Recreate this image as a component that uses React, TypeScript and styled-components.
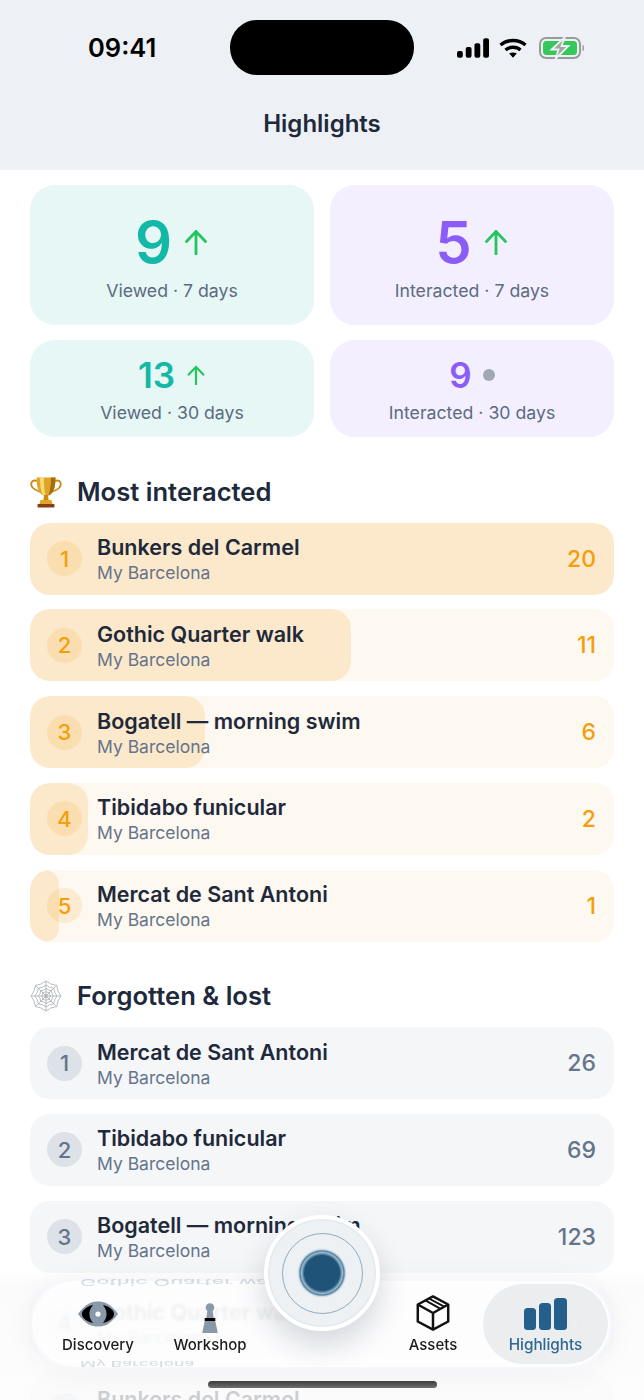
import React from 'react'
import styled, { createGlobalStyle } from 'styled-components'

const GlobalStyle = createGlobalStyle`
  html, body {
    margin: 0;
    padding: 0;
    background: #ffffff;
  }

  * {
    box-sizing: border-box;
  }
`

const Screen = styled.div`
  position: relative;
  width: 644px;
  height: 1400px;
  overflow: hidden;
  background: #ffffff;
  font-family: Inter, 'Liberation Sans', sans-serif;
  color: #1e293b;
`

const Header = styled.header`
  display: flex;
  flex-direction: column;
  height: 170px;
  background: #edf0f4;
`

const StatusBar = styled.div`
  display: grid;
  grid-template-columns: 230px 184px 1fr;
  height: 55px;
  margin-top: 20px;
  align-items: center;
`

const Clock = styled.span`
  padding-left: 88px;
  padding-bottom: 1px;
  font-size: 25.5px;
  font-weight: 600;
  color: #000000;
`

const Island = styled.div`
  height: 55px;
  border-radius: 27px;
  background: #000000;
`

const StatusIcons = styled.div`
  display: flex;
  align-items: center;
  gap: 10px;
  padding-left: 43px;
`

const BatterySlot = styled.div`
  display: flex;
  margin-left: 2px;
`

const Title = styled.h1`
  margin: 34px 0 0;
  text-align: center;
  font-size: 24px;
  line-height: 30px;
  font-weight: 600;
  color: #1e293b;
`

const Content = styled.main`
  display: flex;
  flex-direction: column;
  padding: 15px 30px 0;
`

const StatGrid = styled.div`
  display: grid;
  grid-template-columns: 1fr 1fr;
  grid-template-rows: 139.5px 97px;
  column-gap: 16px;
  row-gap: 15.5px;
`

const StatCard = styled.div<{ $tone: 'teal' | 'purple' }>`
  display: flex;
  flex-direction: column;
  align-items: center;
  justify-content: center;
  border-radius: 25px;
  background: ${p => (p.$tone === 'teal' ? '#e6f7f5' : '#f3effe')};
  color: ${p => (p.$tone === 'teal' ? '#14b8a6' : '#8b5cf6')};
`

const StatValue = styled.div<{ $big?: boolean }>`
  display: flex;
  align-items: center;
  gap: 11px;
  padding-top: ${p => (p.$big ? 3 : 2)}px;
  font-size: ${p => (p.$big ? 58 : 35)}px;
  line-height: ${p => (p.$big ? 66 : 40)}px;
  font-weight: 600;
`

const StatLabel = styled.div<{ $big?: boolean }>`
  margin-top: ${p => (p.$big ? 4 : 6)}px;
  font-size: 17.7px;
  line-height: 24px;
  color: #5b6b80;
`

const Dot = styled.span`
  width: 12px;
  height: 12px;
  border-radius: 50%;
  background: #a0a8b8;
`

const SectionHead = styled.div`
  display: flex;
  align-items: center;
  gap: 15px;
  height: 36px;
  margin-top: 36.5px;
  margin-bottom: 13px;
`

const SectionTitle = styled.h2`
  margin: 0;
  font-size: 25.6px;
  line-height: 36px;
  font-weight: 600;
  color: #1e293b;
`

const RowList = styled.div`
  display: flex;
  flex-direction: column;
  gap: 14.75px;
`

const Row = styled.div<{ $tone: 'amber' | 'slate' }>`
  position: relative;
  flex: none;
  display: flex;
  align-items: center;
  height: 72px;
  padding: 0 18px 0 17px;
  border-radius: 20px;
  overflow: hidden;
  background: ${p => (p.$tone === 'amber' ? '#fdf8f0' : '#f5f6f8')};
  color: ${p => (p.$tone === 'amber' ? '#f59e0b' : '#64748b')};
`

const RowFill = styled.div`
  position: absolute;
  left: 0;
  top: 0;
  bottom: 0;
  border-radius: 20px;
  background: #fce9cb;
`

const Rank = styled.div<{ $tone: 'amber' | 'slate' }>`
  position: relative;
  flex: none;
  display: flex;
  align-items: center;
  justify-content: center;
  width: 35px;
  height: 35px;
  border-radius: 50%;
  font-size: 22px;
  font-weight: 500;
  background: ${p => (p.$tone === 'amber' ? 'rgba(245, 158, 11, 0.14)' : '#dde1e8')};
`

const RowText = styled.div`
  position: relative;
  flex: 1;
  min-width: 0;
  padding: 2px 0 0 15px;
`

const RowTitle = styled.div`
  font-size: 21.5px;
  line-height: 26px;
  font-weight: 600;
  color: #1e293b;
  white-space: nowrap;
`

const RowSub = styled.div`
  padding-top: 1px;
  font-size: 17.5px;
  line-height: 24px;
  color: #64748b;
`

const RowCount = styled.div`
  position: relative;
  font-size: 23px;
  font-weight: 500;
`

const BottomFade = styled.div`
  position: absolute;
  left: 0;
  right: 0;
  bottom: 0;
  height: 132px;
  background: linear-gradient(
    to bottom,
    rgba(255, 255, 255, 0) 0,
    rgba(250, 250, 251, 0.8) 18px,
    rgba(252, 252, 252, 0.78) 100%
  );
`

const TabBar = styled.nav`
  position: absolute;
  left: 30px;
  top: 1279px;
  display: flex;
  align-items: stretch;
  width: 582px;
  height: 90px;
  padding: 5px 4px 5px 12px;
  border-radius: 45px;
  overflow: hidden;
  background: rgba(255, 255, 255, 0.66);
  backdrop-filter: blur(1.4px);
  box-shadow: inset 0 0 0 2px rgba(243, 246, 252, 0.85), 0 2px 30px rgba(30, 41, 59, 0.05);
`

const Mirror = styled.div<{ $bottom?: boolean }>`
  position: absolute;
  left: 50px;
  ${p => (p.$bottom ? 'bottom: 1px;' : 'top: -1px;')}
  font-size: ${p => (p.$bottom ? 17.5 : 21.7)}px;
  line-height: 9px;
  font-weight: 500;
  color: rgba(100, 116, 139, 0.24);
  transform: scaleY(-0.42);
  filter: blur(0.4px);
  white-space: nowrap;
`

const Tab = styled.div<{ $width: number; $active?: boolean }>`
  position: relative;
  flex: none;
  display: flex;
  flex-direction: column;
  align-items: center;
  justify-content: flex-end;
  width: ${p => p.$width}px;
  padding-bottom: 9px;
  border-radius: 40px;
  background: ${p => (p.$active ? 'rgba(232, 234, 235, 0.86)' : 'transparent')};
`

const TabIcon = styled.div<{ $lift?: number }>`
  display: flex;
  align-items: flex-end;
  justify-content: center;
  height: 46px;
  margin-bottom: 2px;
  padding-bottom: ${p => p.$lift ?? 0}px;
`

const TabLabel = styled.span<{ $active?: boolean }>`
  font-size: ${p => (p.$active ? 15.3 : 15)}px;
  line-height: 20px;
  font-weight: 500;
  color: ${p => (p.$active ? '#2f6794' : '#1c1c1e')};
`

const TabGap = styled.div`
  flex: 1;
`

const Capture = styled.div`
  position: absolute;
  left: 264px;
  top: 1215px;
  display: flex;
  align-items: center;
  justify-content: center;
  width: 116px;
  height: 116px;
  border-radius: 50%;
  background: #eef1f4;
  border: 4px solid #ffffff;
  box-shadow: inset 0 0 0 1.5px #e2eaed, 0 14px 30px rgba(30, 41, 59, 0.18);
`

const CaptureRing = styled.div`
  display: flex;
  align-items: center;
  justify-content: center;
  width: 81px;
  height: 81px;
  border-radius: 50%;
  border: 1.5px solid #8fabc0;
`

const CaptureCore = styled.div`
  width: 50px;
  height: 50px;
  border-radius: 50%;
  background: radial-gradient(
    circle closest-side,
    #1f5478 0,
    #1f5478 70%,
    #5c89a8 76%,
    #9dbacd 82%,
    #4f7f9f 88%,
    rgba(143, 176, 200, 0.35) 94%,
    rgba(143, 176, 200, 0) 100%
  );
`

const HomeIndicator = styled.div`
  position: absolute;
  left: 208px;
  top: 1381px;
  width: 229px;
  height: 7px;
  border-radius: 4px;
  background: linear-gradient(to bottom, #3c3c3c, #707070);
`

const Arrow: React.FC<{ size: number }> = ({ size }) => (
  <svg width={size} height={size} viewBox="0 0 26 26" fill="none" stroke="#22c55e" strokeWidth="2.8">
    <path d="M13 25V2.5M3.5 12.5L13 2.5l9.5 10" strokeLinecap="round" strokeLinejoin="round" />
  </svg>
)

const SignalIcon = () => (
  <svg width="32" height="20" viewBox="0 0 33 20" fill="#000000">
    <rect x="0" y="13" width="6" height="7" rx="2" />
    <rect x="9" y="9" width="6" height="11" rx="2" />
    <rect x="18" y="5" width="6" height="15" rx="2" />
    <rect x="27" y="0" width="6" height="20" rx="2" />
  </svg>
)

const WifiIcon = () => (
  <svg width="28" height="20" viewBox="0 0 28 20" fill="none" stroke="#000000" strokeWidth="3.4">
    <path d="M1.5 7C8.5 1 19.5 1 26.5 7" />
    <path d="M6.5 12c4.2-3.6 10.800-3.600 15 0" />
    <path d="M14 19.800l-3.800-4.200c2.200-1.600 5.400-1.600 7.600 0z" fill="#000000" stroke="none" />
  </svg>
)

const BatteryIcon = () => (
  <svg width="47" height="22" viewBox="0 0 47 22" fill="none">
    <rect x="1" y="1" width="40" height="20" rx="6" stroke="#9a9a9a" strokeWidth="2" />
    <rect x="4" y="4" width="34" height="14" rx="3.5" fill="#34c759" />
    <path d="M43.5 7.500c2 .5 2 6.500 0 7z" fill="#9a9a9a" />
    <path d="M26 0L12.500 12.500h7L16.500 22 29.500 9h-7z" fill="#a2a7a2" stroke="#edf0f4" strokeWidth="1.8" />
  </svg>
)

const TrophyIcon = () => (
  <svg width="32" height="32" viewBox="0 0 32 32" fill="none">
    <path d="M7 5C1.500 3 0 8 2.500 11.500 4.500 14 8 15 10.500 16" stroke="#c98a12" strokeWidth="1.8" />
    <path d="M25 5C30.500 3 32 8 29.500 11.500 27.500 14 24 15 21.500 16" stroke="#c98a12" strokeWidth="1.8" />
    <path d="M6.500 1.500h19c0 9-1.500 15.500-7 18h-5c-5.500-2.500-7-9-7-18z" fill="#e0a526" />
    <path d="M10 1.500h4c-.5 6 .5 12 1.500 18h-2.500C10.500 15 10 8 10 1.500z" fill="#f7d978" />
    <path d="M21 1.500h4.500c0 9-1.500 15.500-7 18 1.500-4 2.500-11 2.500-18z" fill="#a66c0e" />
    <path d="M14 19h4l.5 5h-5z" fill="#c98a12" />
    <path d="M10.500 24h11l1 4h-13z" fill="#e0a526" />
    <rect x="7.500" y="28" width="17" height="3.500" rx="0.8" fill="#8a3d12" />
  </svg>
)

// web rings sag in towards the centre between the spokes
const webRing = (r: number) => {
  const point = (a: number, d: number) => `${(16 + Math.cos(a) * d).toFixed(2)} ${(16 + Math.sin(a) * d).toFixed(2)}`
  let d = `M${point(0, r)}`
  for (let i = 1; i <= 8; i++) {
    const a = (i * Math.PI) / 4
    d += `Q${point(a - Math.PI / 8, r * 0.8)} ${point(a, r)}`
  }
  return d + 'Z'
}

const WebIcon = () => (
  <svg width="32" height="32" viewBox="0 0 32 32" fill="none" stroke="#a9adb2" strokeWidth="0.8">
    {[15, 11, 7.5, 4.5, 2].map(r => (
      <path key={r} d={webRing(r)} />
    ))}
    <path d="M16 1V31M1 16H31M5.400 5.400L26.600 26.600M26.600 5.400L5.400 26.600" />
  </svg>
)

const EyeIcon = () => (
  <svg width="42" height="26" viewBox="0 0 42 26">
    <path d="M1 13C9 2 15 .5 21 .5S33 2 41 13c-8 11-14 12.500-20 12.500S9 24 1 13z" fill="#8a99a9" />
    <path d="M16 4C8 6 5 10 5 13s3 7 11 9c-3-4-3.500-6.500-3.500-9s.5-5 3.500-9z" fill="#000000" />
    <path d="M26 4c8 2 11 6 11 9s-3 7-11 9c3-4 3.500-6.500 3.500-9s-.5-5-3.500-9z" fill="#000000" />
    <circle cx="21" cy="13" r="2.600" fill="#ffffff" />
  </svg>
)

const PawnIcon = () => (
  <svg width="16" height="30" viewBox="0 0 16 30">
    <circle cx="8" cy="4.500" r="4.300" fill="#8a99a9" />
    <path d="M5.500 7h5l1.200 8H4.300z" fill="#8a99a9" />
    <rect x="2.700" y="15" width="10.600" height="3" fill="#000000" />
    <path d="M2.700 18h10.600l2.500 12H.2z" fill="#8a99a9" />
  </svg>
)

const BoxIcon = () => (
  <svg width="34" height="36" viewBox="0 0 38 40" fill="none" stroke="#111111" strokeWidth="2.8" strokeLinejoin="round">
    <path d="M19 1.500L36 10.500V29.500L19 38.500 2 29.500V10.500Z" />
    <path d="M2 10.500L19 20 36 10.500M19 20V38.500" />
    <path d="M10.500 6L27.500 15.300M14.500 3.800L31.500 13" strokeWidth="2.2" />
  </svg>
)

const BarsIcon = () => (
  <svg width="43" height="32" viewBox="0 0 43 32" fill="#255f8c">
    <rect x="0" y="10" width="12" height="22" rx="3.5" />
    <rect x="15" y="5" width="12" height="27" rx="3.5" />
    <rect x="30" y="0" width="13" height="32" rx="3.5" />
  </svg>
)

type Place = { title: string; count: number }

const top: Place[] = [
  { title: 'Bunkers del Carmel', count: 20 },
  { title: 'Gothic Quarter walk', count: 11 },
  { title: 'Bogatell — morning swim', count: 6 },
  { title: 'Tibidabo funicular', count: 2 },
  { title: 'Mercat de Sant Antoni', count: 1 },
]

const forgotten: Place[] = [
  { title: 'Mercat de Sant Antoni', count: 26 },
  { title: 'Tibidabo funicular', count: 69 },
  { title: 'Bogatell — morning swim', count: 123 },
  { title: 'Gothic Quarter walk', count: 203 },
  { title: 'Bunkers del Carmel', count: 240 },
]

const PlaceRow: React.FC<{ place: Place; rank: number; tone: 'amber' | 'slate'; max?: number }> = ({
  place,
  rank,
  tone,
  max,
}) => (
  <Row $tone={tone}>
    {max ? <RowFill style={{ width: `${(place.count / max) * 100}%` }} /> : null}
    <Rank $tone={tone}>{rank}</Rank>
    <RowText>
      <RowTitle>{place.title}</RowTitle>
      <RowSub>My Barcelona</RowSub>
    </RowText>
    <RowCount>{place.count}</RowCount>
  </Row>
)

const App: React.FC = () => (
  <Screen>
    <GlobalStyle />
    <Header>
      <StatusBar>
        <Clock>09:41</Clock>
        <Island />
        <StatusIcons>
          <SignalIcon />
          <WifiIcon />
          <BatterySlot>
            <BatteryIcon />
          </BatterySlot>
        </StatusIcons>
      </StatusBar>
      <Title>Highlights</Title>
    </Header>

    <Content>
      <StatGrid>
        <StatCard $tone="teal">
          <StatValue $big>
            9 <Arrow size={26} />
          </StatValue>
          <StatLabel $big>Viewed · 7 days</StatLabel>
        </StatCard>
        <StatCard $tone="purple">
          <StatValue $big>
            5 <Arrow size={26} />
          </StatValue>
          <StatLabel $big>Interacted · 7 days</StatLabel>
        </StatCard>
        <StatCard $tone="teal">
          <StatValue>
            13 <Arrow size={20} />
          </StatValue>
          <StatLabel>Viewed · 30 days</StatLabel>
        </StatCard>
        <StatCard $tone="purple">
          <StatValue>
            9 <Dot />
          </StatValue>
          <StatLabel>Interacted · 30 days</StatLabel>
        </StatCard>
      </StatGrid>

      <SectionHead>
        <TrophyIcon />
        <SectionTitle>Most interacted</SectionTitle>
      </SectionHead>
      <RowList>
        {top.map((place, i) => (
          <PlaceRow key={place.title} place={place} rank={i + 1} tone="amber" max={20} />
        ))}
      </RowList>

      <SectionHead>
        <WebIcon />
        <SectionTitle>Forgotten &amp; lost</SectionTitle>
      </SectionHead>
      <RowList>
        {forgotten.map((place, i) => (
          <PlaceRow key={place.title} place={place} rank={i + 1} tone="slate" />
        ))}
      </RowList>
    </Content>

    <BottomFade />

    <TabBar>
      <Mirror>Gothic Quarter walk</Mirror>
      <Mirror $bottom>My Barcelona</Mirror>
      <Tab $width={112}>
        <TabIcon $lift={6}>
          <EyeIcon />
        </TabIcon>
        <TabLabel>Discovery</TabLabel>
      </Tab>
      <Tab $width={112}>
        <TabIcon>
          <PawnIcon />
        </TabIcon>
        <TabLabel>Workshop</TabLabel>
      </Tab>
      <TabGap />
      <Tab $width={100}>
        <TabIcon $lift={2}>
          <BoxIcon />
        </TabIcon>
        <TabLabel>Assets</TabLabel>
      </Tab>
      <Tab $width={125} $active>
        <TabIcon $lift={3}>
          <BarsIcon />
        </TabIcon>
        <TabLabel $active>Highlights</TabLabel>
      </Tab>
    </TabBar>

    <Capture>
      <CaptureRing>
        <CaptureCore />
      </CaptureRing>
    </Capture>

    <HomeIndicator />
  </Screen>
)

export default App
